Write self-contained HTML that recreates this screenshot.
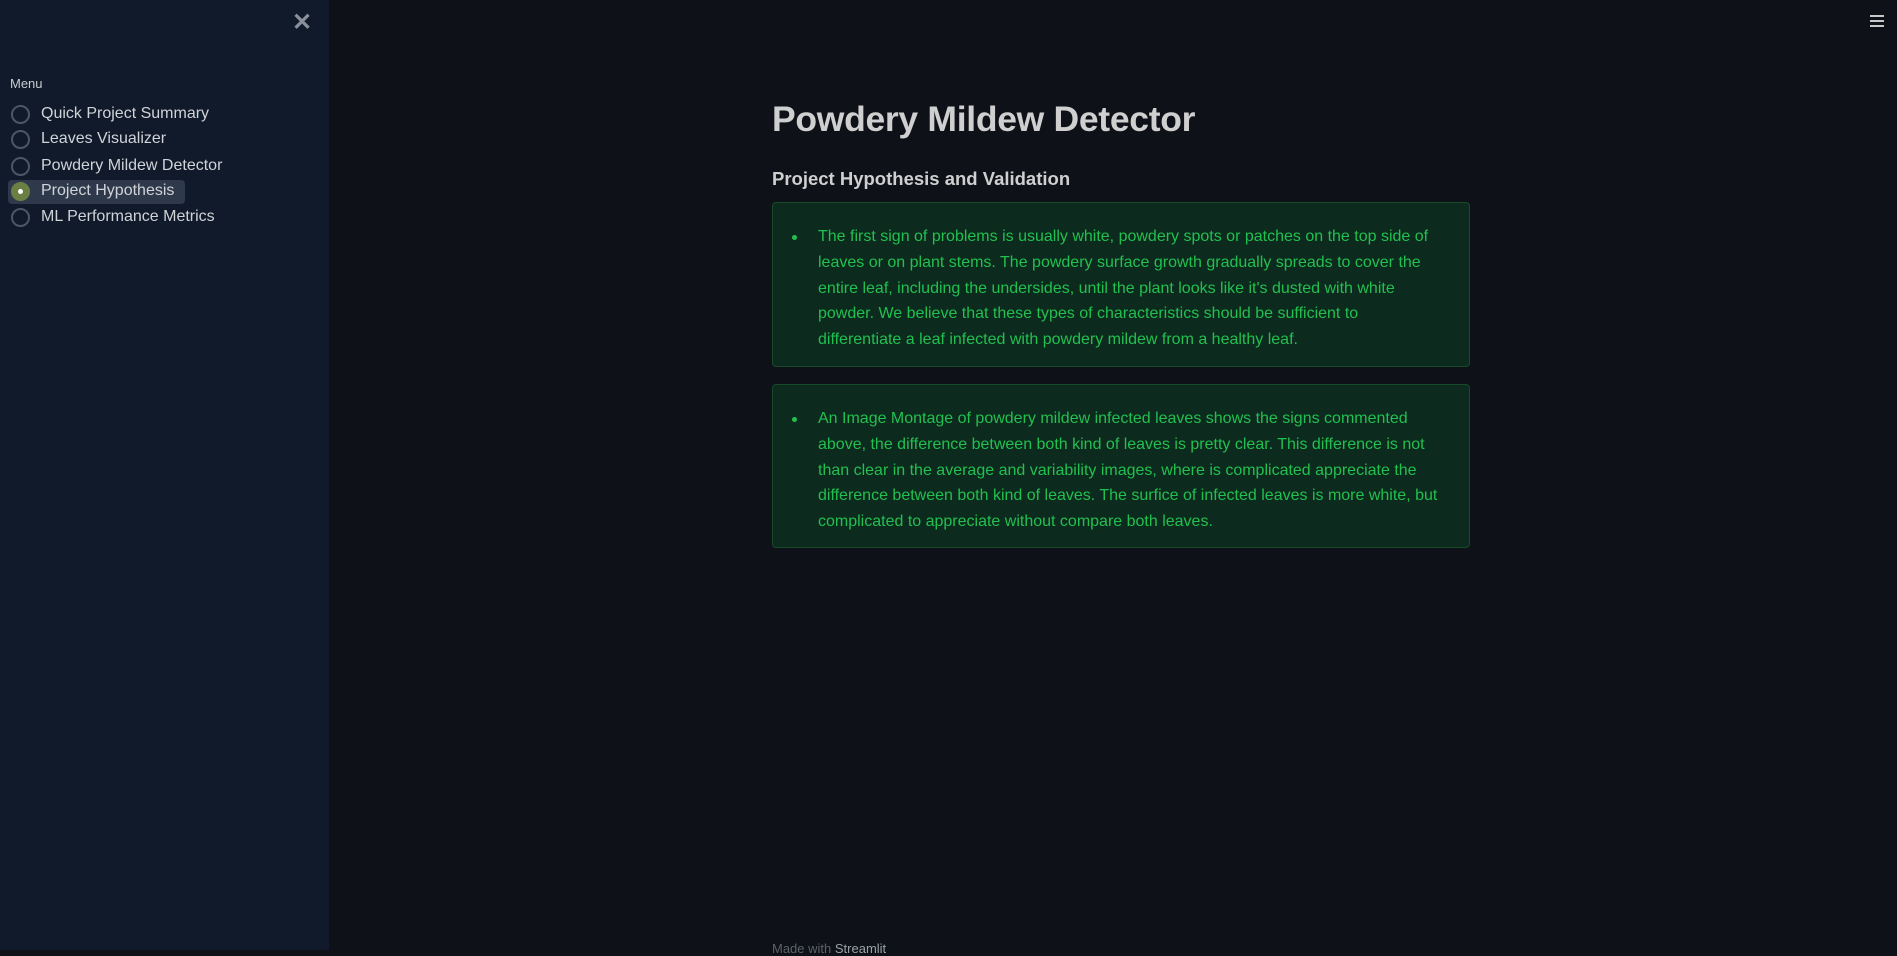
<!DOCTYPE html>
<html><head><meta charset="utf-8"><style>
*{margin:0;padding:0;box-sizing:border-box}
body{width:1897px;height:950px;background:#0e1117;font-family:"Liberation Sans",sans-serif;position:relative;overflow:hidden}
.sb{position:absolute;left:0;top:0;width:329px;height:950px;background:#101a2b}
.x{position:absolute;left:292px;top:8px;color:#8a909a;font-size:24px;font-weight:bold}
.menu{position:absolute;left:10px;top:76px;color:#c9ccd2;font-size:13px}
.it{position:absolute;left:0;height:24px;width:300px;color:#d0d3d8;font-size:16px}
.it .c{position:absolute;left:11px;top:3px;width:19px;height:19px;border:2px solid #4f5663;border-radius:50%}
.it span{position:absolute;left:41px;top:3px}
.sel{position:absolute;left:8px;top:180px;width:177px;height:24px;background:#2e3a4c;border-radius:4px}
.it .on{background:#6b7f45;border-color:#6b7f45}
.it .on:after{content:"";position:absolute;left:5px;top:5px;width:5px;height:5px;border-radius:50%;background:#fff}
h1{position:absolute;left:772px;top:99px;color:#cfcfcf;font-size:35.5px;font-weight:bold;letter-spacing:-0.3px}
h3{position:absolute;left:772px;top:168px;color:#cfcfcf;font-size:18.5px;font-weight:bold}
.box{position:absolute;left:772px;width:698px;background:#0c2a1d;border:1px solid #174a28;border-radius:4px;color:#22c050;font-size:16px;line-height:25.8px;white-space:nowrap;padding:21px 0 0 45px}
.box:before{content:"";position:absolute;left:19px;top:32px;width:5px;height:5px;border-radius:50%;background:#22c050}
.ham{position:absolute;left:1870px;top:15px;width:14px}
.ham i{display:block;height:2px;background:#c8c8c8;margin-bottom:3px}
.ft{position:absolute;left:772px;top:941px;color:#5c6068;font-size:13px}
.ft b{color:#9aa0a8;font-weight:normal}
</style></head><body>
<div class="sb">
<div class="x">✕</div>
<div class="menu">Menu</div>
<div class="sel"></div>
<div class="it" style="top:102px"><div class="c"></div><span>Quick Project Summary</span></div>
<div class="it" style="top:127px"><div class="c"></div><span>Leaves Visualizer</span></div>
<div class="it" style="top:154px"><div class="c"></div><span>Powdery Mildew Detector</span></div>
<div class="it" style="top:179px"><div class="c on"></div><span>Project Hypothesis</span></div>
<div class="it" style="top:205px"><div class="c"></div><span>ML Performance Metrics</span></div>
</div>
<div class="ham"><i></i><i></i><i></i></div>
<h1>Powdery Mildew Detector</h1>
<h3>Project Hypothesis and Validation</h3>
<div class="box" style="top:202px;height:165px">The first sign of problems is usually white, powdery spots or patches on the top side of<br>leaves or on plant stems. The powdery surface growth gradually spreads to cover the<br>entire leaf, including the undersides, until the plant looks like it's dusted with white<br>powder. We believe that these types of characteristics should be sufficient to<br>differentiate a leaf infected with powdery mildew from a healthy leaf.</div>
<div class="box" style="top:384px;height:164px">An Image Montage of powdery mildew infected leaves shows the signs commented<br>above, the difference between both kind of leaves is pretty clear. This difference is not<br>than clear in the average and variability images, where is complicated appreciate the<br>difference between both kind of leaves. The surfice of infected leaves is more white, but<br>complicated to appreciate without compare both leaves.</div>
<div class="ft">Made with <b>Streamlit</b></div>
</body></html>
